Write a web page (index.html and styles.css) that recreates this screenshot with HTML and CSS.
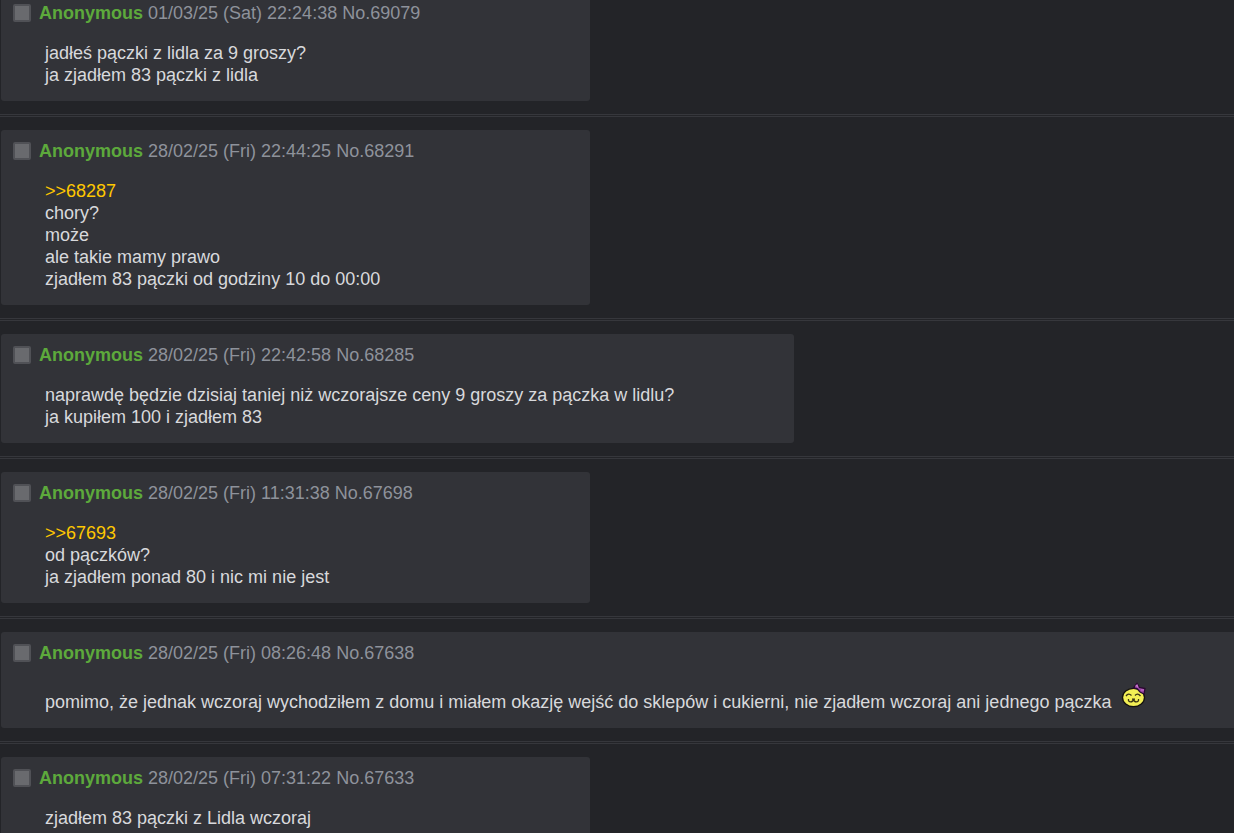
FILE: index.html
```html
<!DOCTYPE html>
<html lang="pl">
<head>
  <meta charset="UTF-8" />
  <meta name="viewport" content="width=device-width, initial-scale=1.0"/>
  <title>Posts</title>
  <link rel="stylesheet" href="styles.css">
</head>
<body>
  <main class="posts">
    <article class="post">
      <header class="post-info">
        <input type="checkbox" id="p69079" aria-label="No.69079">
        <label for="p69079"><span class="name">Anonymous</span> 01/03/25 (Sat) 22:24:38 No.69079</label>
      </header>
      <p class="message">jadłeś pączki z lidla za 9 groszy?<br>ja zjadłem 83 pączki z lidla</p>
    </article>
    <hr>
    <article class="post">
      <header class="post-info">
        <input type="checkbox" id="p68291" aria-label="No.68291">
        <label for="p68291"><span class="name">Anonymous</span> 28/02/25 (Fri) 22:44:25 No.68291</label>
      </header>
      <p class="message"><a href="#p68287">&gt;&gt;68287</a><br>chory?<br>może<br>ale takie mamy prawo<br>zjadłem 83 pączki od godziny 10 do 00:00</p>
    </article>
    <hr>
    <article class="post">
      <header class="post-info">
        <input type="checkbox" id="p68285" aria-label="No.68285">
        <label for="p68285"><span class="name">Anonymous</span> 28/02/25 (Fri) 22:42:58 No.68285</label>
      </header>
      <p class="message">naprawdę będzie dzisiaj taniej niż wczorajsze ceny 9 groszy za pączka w lidlu?<br>ja kupiłem 100 i zjadłem 83</p>
    </article>
    <hr>
    <article class="post">
      <header class="post-info">
        <input type="checkbox" id="p67698" aria-label="No.67698">
        <label for="p67698"><span class="name">Anonymous</span> 28/02/25 (Fri) 11:31:38 No.67698</label>
      </header>
      <p class="message"><a href="#p67693">&gt;&gt;67693</a><br>od pączków?<br>ja zjadłem ponad 80 i nic mi nie jest</p>
    </article>
    <hr>
    <article class="post">
      <header class="post-info">
        <input type="checkbox" id="p67638" aria-label="No.67638">
        <label for="p67638"><span class="name">Anonymous</span> 28/02/25 (Fri) 08:26:48 No.67638</label>
      </header>
      <p class="message with-emote">
        <span>pomimo, że jednak wczoraj wychodziłem z domu i miałem okazję wejść do sklepów i cukierni, nie zjadłem wczoraj ani jednego pączka</span>
        <svg class="emote" viewBox="0 0 26 26" aria-hidden="true">
          <ellipse cx="12.500" cy="15.500" rx="11" ry="9.200" fill="#f3ef55" stroke="#15120f" stroke-width="1.300"/>
          <path d="M12.500 6 L16 1.500 L18.500 5.500 L24 6.500 L23 12 L19 10 L16 6.500 Z" fill="#9a45a5" stroke="#2a0b31" stroke-width="1.300"/>
          <path d="M14.500 4.500 L16 3 L17 5.500 M20 8 L23 8" fill="none" stroke="#c878d0" stroke-width="1.200"/>
          <path d="M5 14 Q7.500 10.500 10.500 13.500 M14 13.500 Q16.500 10.500 19.500 14" fill="none" stroke="#3b3515" stroke-width="1.300"/>
          <path d="M7.500 17 Q7 19.800 9.700 19.800 Q12 19.800 12.500 17.500 Q13 19.800 15.300 19.800 Q18 19.800 17.500 17 M11 17.200 H14" fill="none" stroke="#3b3515" stroke-width="1.300"/>
        </svg>
      </p>
    </article>
    <hr>
    <article class="post">
      <header class="post-info">
        <input type="checkbox" id="p67633" aria-label="No.67633">
        <label for="p67633"><span class="name">Anonymous</span> 28/02/25 (Fri) 07:31:22 No.67633</label>
      </header>
      <p class="message">zjadłem 83 pączki z Lidla wczoraj</p>
    </article>
  </main>
</body>
</html>
```
FILE: styles.css
```css
:root {
  --bg: #232428;
  --post: #323338;
  --line: #36373c;
  --text: #d8d9dc;
  --muted: #8e929b;
  --name: #5da93c;
  --link: #ffc800;
}
*{margin:0;padding:0;box-sizing:border-box;}
html {overflow:hidden;}
body {
  background: var(--bg); color: var(--text);
  font: 18px/22px "Liberation Sans", Arial, sans-serif;
}
.posts {margin-top:-8px;}
.post {
  width:max-content; min-width:589px; margin-left:1px;
  padding:10px 120px 15px 12px;
  background: var(--post); border-radius:3px;
}
.post-info {display:flex; align-items:center; gap:8px; color: var(--muted);}
.post-info input {
  appearance:none; width:18px; height:18px;
  background:#696a6e; border:2px solid #505156; border-radius:2px;
}
.post-info input:checked {background: var(--name);}
.name {color: var(--name); font-weight:bold;}
.message {margin:18px 0 0 32px;}
.message a {color: var(--link); text-decoration:none;}
.with-emote {display:flex; align-items:flex-end; gap:10px;}
.emote {width:26px; height:26px; margin-bottom:5px;}
hr {border:0; border-top:3px double var(--line); margin:13px 0;}
```
